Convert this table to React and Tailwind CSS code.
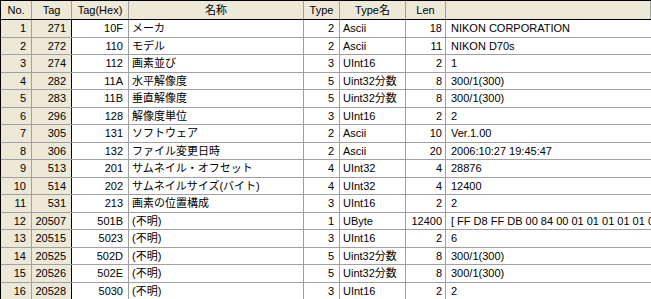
import React from 'react'

const columns = [
  { key: 'no', label: 'No.', w: 'w-[31px]', align: 'text-right pr-[5px]', fixed: true },
  { key: 'tag', label: 'Tag', w: 'w-[40px]', align: 'text-right pr-[5px]', fixed: true },
  { key: 'hex', label: 'Tag(Hex)', w: 'w-[57px]', align: 'text-right pr-[5px]' },
  { key: 'name', label: '名称', w: 'w-[175px]', align: 'text-left pl-[3px]' },
  { key: 'type', label: 'Type', w: 'w-[36px]', align: 'text-right pr-[5px]' },
  { key: 'typeName', label: 'Type名', w: 'w-[66px]', align: 'text-left pl-[3px]' },
  { key: 'len', label: 'Len', w: 'w-[40px]', align: 'text-right pr-[3px]' },
  { key: 'value', label: '', w: 'flex-1 min-w-0', align: 'text-left pl-[5px]' }
]

const rows = [
  [1, 271, '10F', 'メーカ', 2, 'Ascii', 18, 'NIKON CORPORATION'],
  [2, 272, '110', 'モデル', 2, 'Ascii', 11, 'NIKON D70s'],
  [3, 274, '112', '画素並び', 3, 'UInt16', 2, '1'],
  [4, 282, '11A', '水平解像度', 5, 'Uint32分数', 8, '300/1(300)'],
  [5, 283, '11B', '垂直解像度', 5, 'Uint32分数', 8, '300/1(300)'],
  [6, 296, '128', '解像度単位', 3, 'UInt16', 2, '2'],
  [7, 305, '131', 'ソフトウェア', 2, 'Ascii', 10, 'Ver.1.00'],
  [8, 306, '132', 'ファイル変更日時', 2, 'Ascii', 20, '2006:10:27 19:45:47'],
  [9, 513, '201', 'サムネイル・オフセット', 4, 'UInt32', 4, '28876'],
  [10, 514, '202', 'サムネイルサイズ(バイト)', 4, 'UInt32', 4, '12400'],
  [11, 531, '213', '画素の位置構成', 3, 'UInt16', 2, '2'],
  [12, 20507, '501B', '(不明)', 1, 'UByte', 12400, '[ FF D8 FF DB 00 84 00 01 01 01 01 01 01 01 01 01 01 01'],
  [13, 20515, '5023', '(不明)', 3, 'UInt16', 2, '6'],
  [14, 20525, '502D', '(不明)', 5, 'Uint32分数', 8, '300/1(300)'],
  [15, 20526, '502E', '(不明)', 5, 'Uint32分数', 8, '300/1(300)'],
  [16, 20528, '5030', '(不明)', 3, 'UInt16', 2, '2']
]

export default function App() {
  return (
    <div
      className="w-[651px] h-[299px] overflow-hidden bg-white text-[11px] leading-none text-black"
      style={{ fontFamily: '"Liberation Sans", "Noto Sans CJK JP", sans-serif' }}
    >
      <div className="border-l border-black">
        {/* header */}
        <div className="flex h-[20px] border-y border-black bg-[#ece9d8]">
          {columns.map(col => (
            <div
              key={col.key}
              className={`${col.w} shrink-0 flex items-center justify-center border-r border-[#a0a0a0] whitespace-nowrap`}
            >
              {col.label}
            </div>
          ))}
        </div>

        {rows.map((row, i) => (
          <div key={row[0]} className={`flex ${i % 2 === 0 ? 'h-[18px]' : 'h-[17px]'} border-b border-[#a0a0a0]`}>
            {columns.map((col, j) => (
              <div
                key={col.key}
                className={`${col.w} ${col.align} shrink-0 flex items-center ${col.align.startsWith('text-right') ? 'justify-end' : 'justify-start'} overflow-hidden whitespace-nowrap ${col.fixed ? 'bg-[#ece9d8]' : 'bg-white'} ${j === 1 ? 'border-r border-black' : j === 7 ? '' : 'border-r border-[#a0a0a0]'}`}
              >
                {row[j]}
              </div>
            ))}
          </div>
        ))}
      </div>
    </div>
  )
}
